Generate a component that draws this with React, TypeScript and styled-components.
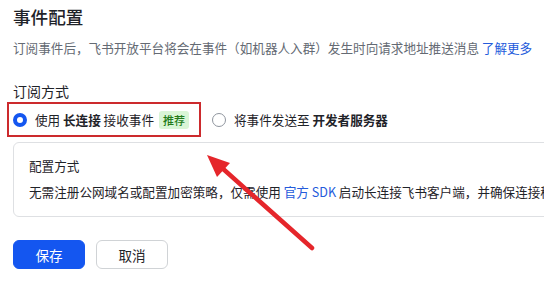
import React, { useState } from 'react';
import styled, { createGlobalStyle } from 'styled-components';

const GlobalStyle = createGlobalStyle`
  html, body {
    margin: 0;
    padding: 0;
    background: #ffffff;
  }
  body {
    font-family: "Noto Sans CJK SC", "Noto Sans", sans-serif;
    color: #1f2329;
  }
`;

type Mode = 'websocket' | 'webhook';

const App: React.FC = () => {
  const [mode, setMode] = useState<Mode>('websocket');

  return (
    <>
      <GlobalStyle />
      <Page>
        <Title>事件配置</Title>
        <Description>
          订阅事件后，飞书开放平台将会在事件（如机器人入群）发生时向请求地址推送消息 <Link href="#">了解更多</Link>
        </Description>

        <SectionLabel>订阅方式</SectionLabel>
        <RadioGroup>
          <Option highlighted onClick={() => setMode('websocket')}>
            <Radio checked={mode === 'websocket'} />
            <OptionText>
              使用 <strong>长连接</strong> 接收事件
            </OptionText>
            <Tag>推荐</Tag>
          </Option>
          <Option onClick={() => setMode('webhook')}>
            <Radio checked={mode === 'webhook'} />
            <OptionText>
              将事件发送至 <strong>开发者服务器</strong>
            </OptionText>
          </Option>
        </RadioGroup>

        <Card>
          <CardTitle>配置方式</CardTitle>
          <CardText>
            无需注册公网域名或配置加密策略，仅需使用 <Link href="#">官方 SDK</Link> 启动长连接飞书客户端，并确保连接稳定即可接收事件
          </CardText>
        </Card>

        <Actions>
          <Button primary>保存</Button>
          <Button>取消</Button>
        </Actions>

        {/* 标注箭头 */}
        <Arrow width="544" height="293" viewBox="0 0 544 293">
          <line x1="312" y1="248" x2="221" y2="167" stroke="#e5262b" strokeWidth="4.5" strokeLinecap="round" />
          <polygon points="207,155 230,163 217,177" fill="#e5262b" />
        </Arrow>
      </Page>
    </>
  );
};

export default App;

const Page = styled.div`
  position: relative;
  width: 544px;
  height: 293px;
  overflow: hidden;
  padding: 5px 0 0 13px;
  box-sizing: border-box;
`;

const Title = styled.h1`
  margin: 0;
  font-size: 17.6px;
  line-height: 24px;
  font-weight: 500;
  color: #1f2329;
`;

const Description = styled.p`
  margin: 9px 0 0;
  font-size: 12.6px;
  line-height: 20px;
  color: #646a73;
  white-space: nowrap;
`;

const Link = styled.a`
  color: #245bdb;
  text-decoration: none;
`;

const SectionLabel = styled.div`
  margin-top: 22px;
  font-size: 14px;
  line-height: 22px;
  color: #1f2329;
`;

const RadioGroup = styled.div`
  display: flex;
  align-items: center;
`;

const Option = styled.label<{ highlighted?: boolean }>`
  display: flex;
  align-items: center;
  height: 35px;
  box-sizing: border-box;
  cursor: pointer;
  font-size: 12.6px;
  color: #1f2329;
  ${(p) =>
    p.highlighted
      ? `
    margin-left: -6px;
    padding: 0 10px 0 4px;
    border: 2px solid #cc2a2d;
  `
      : `
    margin-left: 11px;
  `}
`;

const Radio = styled.span<{ checked?: boolean }>`
  width: 14px;
  height: 14px;
  border-radius: 50%;
  box-sizing: border-box;
  flex-shrink: 0;
  background: #fff;
  border: ${(p) => (p.checked ? '4px solid #1456f0' : '1px solid #8f959e')};
`;

const OptionText = styled.span`
  margin-left: 8px;
  line-height: 20px;
  white-space: nowrap;

  strong {
    font-weight: 700;
  }
`;

const Tag = styled.span`
  margin-left: 5px;
  padding: 0 4px;
  height: 18px;
  line-height: 18px;
  font-size: 11px;
  font-weight: 500;
  border-radius: 3px;
  background: #d9f5d6;
  color: #237b19;
`;

const Card = styled.div`
  margin-top: 5px;
  width: 640px;
  height: 75px;
  box-sizing: border-box;
  padding: 13px 15px 0;
  border: 1px solid #dee0e3;
  border-radius: 6px;
`;

const CardTitle = styled.div`
  font-size: 12.6px;
  line-height: 20px;
  color: #1f2329;
`;

const CardText = styled.div`
  margin-top: 6px;
  font-size: 12.6px;
  line-height: 20px;
  color: #1f2329;
  white-space: nowrap;
`;

const Actions = styled.div`
  display: flex;
  gap: 11px;
  margin-top: 23px;
`;

const Button = styled.button<{ primary?: boolean }>`
  width: 72px;
  height: 29px;
  box-sizing: border-box;
  border-radius: 6px;
  font-family: inherit;
  font-size: 13.6px;
  cursor: pointer;
  border: 1px solid ${(p) => (p.primary ? '#1456f0' : '#d0d3d6')};
  background: ${(p) => (p.primary ? '#1456f0' : '#ffffff')};
  color: ${(p) => (p.primary ? '#ffffff' : '#1f2329')};
`;

const Arrow = styled.svg`
  position: absolute;
  left: 0;
  top: 0;
  pointer-events: none;
`;
